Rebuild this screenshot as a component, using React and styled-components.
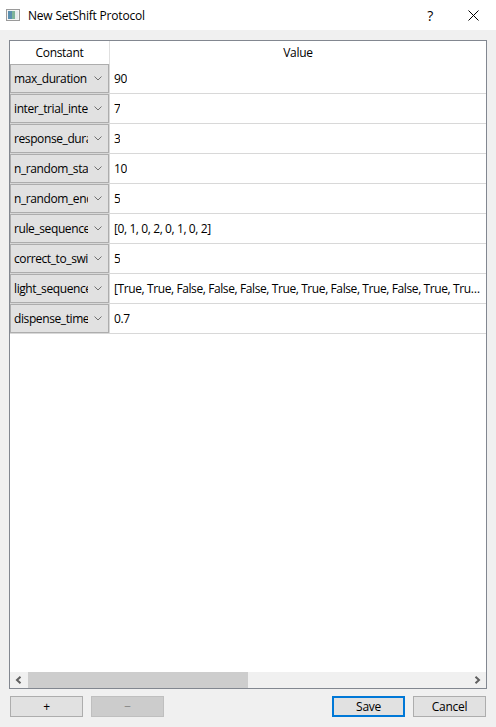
import React from "react";
import styled, { createGlobalStyle } from "styled-components";

const Global = createGlobalStyle`
  html, body { margin: 0; padding: 0; background: #f0f0f0; }
  body { font-family: "Segoe UI", "Open Sans", "Noto Sans", sans-serif; font-size: 12px; color: #000; letter-spacing: -0.3px; }
`;

const Window = styled.div`
  width: 496px;
  height: 727px;
  display: flex;
  flex-direction: column;
  background: #f0f0f0;
  overflow: hidden;
`;

const TitleBar = styled.div`
  height: 30px;
  background: #ffffff;
  display: flex;
  align-items: center;
  padding-left: 6px;
  box-sizing: border-box;
`;

const TitleText = styled.span`
  margin-left: 8px;
  font-size: 12px;
  flex: 1;
  letter-spacing: -0.2px;
`;

const TitleButton = styled.div`
  width: ${(p) => p.$w}px;
  height: 30px;
  display: flex;
  align-items: center;
  justify-content: center;
  font-size: 14px;
`;

const Body = styled.div`
  flex: 1;
  display: flex;
  flex-direction: column;
  padding: 10px 9px 10px 9px;
  gap: 7px;
  min-height: 0;
`;

const Frame = styled.div`
  flex: 1;
  border: 1px solid #828790;
  background: #ffffff;
  display: flex;
  flex-direction: column;
  min-height: 0;
`;

const Table = styled.div`
  flex: 1;
  display: flex;
  flex-direction: column;
`;

const HeaderRow = styled.div`
  display: grid;
  grid-template-columns: 100px 1fr;
  height: 23px;
`;

const HeaderCell = styled.div`
  display: flex;
  align-items: center;
  justify-content: center;
  padding-bottom: 1px;
  border-right: ${(p) => (p.$divider ? "1px solid #e0e0e0" : "none")};
`;

const Row = styled.div`
  display: grid;
  grid-template-columns: 100px 1fr;
  height: 30px;
  box-sizing: border-box;
  letter-spacing: -0.4px;
`;

const ComboCell = styled.div`
  border-right: 1px solid #d8d8d8;
  border-bottom: 1px solid #d8d8d8;
  display: flex;
`;

const Combo = styled.div`
  flex: 1;
  background: #e1e1e1;
  border: 1px solid #adadad;
  display: flex;
  align-items: center;
  padding: 0 6px 0 3px;
  min-width: 0;
`;

const ComboText = styled.span`
  flex: 1;
  overflow: hidden;
  white-space: nowrap;
  padding-bottom: 1px;
  margin-right: 6px;
`;

const ValueCell = styled.div`
  border-bottom: 1px solid #d8d8d8;
  display: flex;
  align-items: center;
  padding: 0 4px 1px 4px;
  overflow: hidden;
  min-width: 0;
`;

const ValueText = styled.span`
  overflow: hidden;
  white-space: nowrap;
  text-overflow: ellipsis;
`;

const HScroll = styled.div`
  height: 16px;
  background: #f0f0f0;
  display: flex;
  align-items: stretch;
`;

const ScrollArrow = styled.div`
  width: 17px;
  display: flex;
  align-items: center;
  justify-content: center;
`;

const Track = styled.div`
  flex: 1;
  display: flex;
  padding: 0 1px;
`;

const Thumb = styled.div`
  width: 220px;
  background: #cdcdcd;
`;

const ButtonRow = styled.div`
  display: flex;
  align-items: center;
  padding: 0 1px;
  gap: 8px;
`;

const Spacer = styled.div`
  flex: 1;
`;

const Button = styled.div`
  width: 73px;
  height: 21px;
  box-sizing: border-box;
  display: flex;
  align-items: center;
  justify-content: center;
  background: ${(p) => (p.$disabled ? "#cccccc" : "#e1e1e1")};
  border: ${(p) =>
    p.$focused ? "2px solid #0078d7" : p.$disabled ? "1px solid #bfbfbf" : "1px solid #adadad"};
  color: ${(p) => (p.$disabled ? "#838383" : "#000")};
  font-size: 12px;
`;

const Chevron = () => (
  <svg width="8" height="5" viewBox="0 0 8 5" style={{ flex: "none" }}>
    <path d="M0.5 0.5 L4 4 L7.5 0.5" fill="none" stroke="#707070" strokeWidth="1" />
  </svg>
);

const WinIcon = () => (
  <svg width="14" height="12" viewBox="0 0 14 12">
    <rect x="0.5" y="0.5" width="13" height="11" fill="#f4f4f4" stroke="#9a9a9a" />
    <rect x="2" y="2" width="4" height="8" fill="#5a8fb0" />
    <rect x="6" y="2" width="3" height="8" fill="#7fb49a" />
    <rect x="9" y="2" width="3" height="8" fill="#e6ebee" />
  </svg>
);

const rows = [
  ["max_duration", "90"],
  ["inter_trial_interval", "7"],
  ["response_duration", "3"],
  ["n_random_start", "10"],
  ["n_random_end", "5"],
  ["rule_sequence", "[0, 1, 0, 2, 0, 1, 0, 2]"],
  ["correct_to_switch", "5"],
  ["light_sequence", "[True, True, False, False, False, True, True, False, True, False, True, True, False, True]"],
  ["dispense_time", "0.7"],
];

export default function App() {
  return (
    <Window>
      <Global />
      <TitleBar>
        <WinIcon />
        <TitleText>New SetShift Protocol</TitleText>
        <TitleButton $w={40}>?</TitleButton>
        <TitleButton $w={46}>
          <svg width="11" height="11" viewBox="0 0 11 11">
            <path d="M0.5 0.5 L10.5 10.5 M10.5 0.5 L0.5 10.5" stroke="#000" strokeWidth="1" />
          </svg>
        </TitleButton>
      </TitleBar>
      <Body>
        <Frame>
          <Table>
            <HeaderRow>
              <HeaderCell $divider>Constant</HeaderCell>
              <HeaderCell>Value</HeaderCell>
            </HeaderRow>
            {rows.map(([k, v]) => (
              <Row key={k}>
                <ComboCell>
                  <Combo>
                    <ComboText>{k}</ComboText>
                    <Chevron />
                  </Combo>
                </ComboCell>
                <ValueCell>
                  <ValueText>{v}</ValueText>
                </ValueCell>
              </Row>
            ))}
          </Table>
          <HScroll>
            <ScrollArrow>
              <svg width="7" height="8" viewBox="0 0 7 8">
                <path d="M5.5 0.8 L2 4 L5.5 7.2" fill="none" stroke="#606060" strokeWidth="2" />
              </svg>
            </ScrollArrow>
            <Track>
              <Thumb />
            </Track>
            <ScrollArrow>
              <svg width="7" height="8" viewBox="0 0 7 8">
                <path d="M1.5 0.8 L5 4 L1.5 7.2" fill="none" stroke="#606060" strokeWidth="2" />
              </svg>
            </ScrollArrow>
          </HScroll>
        </Frame>
        <ButtonRow>
          <Button>+</Button>
          <Button $disabled>−</Button>
          <Spacer />
          <Button $focused>Save</Button>
          <Button>Cancel</Button>
        </ButtonRow>
      </Body>
    </Window>
  );
}
